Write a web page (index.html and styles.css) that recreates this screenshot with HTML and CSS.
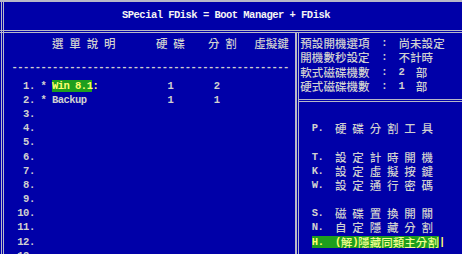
FILE: index.html
```html
<!DOCTYPE html>
<html lang="zh-Hant">
<head>
    <meta charset="UTF-8">
    <title>SPecial FDisk</title>
    <link rel="stylesheet" href="styles.css">
</head>
<body>
    <div class="screen">
        <div class="top"></div>
        <div class="title">SPecial FDisk = Boot Manager + FDisk</div>
        <div class="sep"></div>

        <div class="main">
            <!-- lista de sistemas -->
            <div class="left">
                <div class="row">         <b class="w">選</b> <b class="w">單</b> <b class="w">說</b> <b class="w">明</b>       <b class="w">硬</b> <b class="w">碟</b>    <b class="w">分</b> <b class="w">割</b>   <b class="w">虛</b><b class="w">擬</b><b class="w">鍵</b></div>
                <div class="row"></div>
                <div class="row dash">  ------------------------------------------------</div>
                <div class="row">    1. * <span class="hl">Win 8.1</span><span class="cur">:</span>            1       2</div>
                <div class="row">    2. * Backup              1       1</div>
                <div class="row">    3.</div>
                <div class="row">    4.</div>
                <div class="row">    5.</div>
                <div class="row">    6.</div>
                <div class="row">    7.</div>
                <div class="row">    8.</div>
                <div class="row">    9.</div>
                <div class="row">   10.</div>
                <div class="row">   11.</div>
                <div class="row">   12.</div>
                <div class="row">   13.</div>
            </div>

            <!-- configuracao e menu -->
            <div class="right">
                <div class="info">
                    <div class="row"><b class="w">預</b><b class="w">設</b><b class="w">開</b><b class="w">機</b><b class="w">選</b><b class="w">項</b>  :  <b class="w">尚</b><b class="w">未</b><b class="w">設</b><b class="w">定</b></div>
                    <div class="row"><b class="w">開</b><b class="w">機</b><b class="w">數</b><b class="w">秒</b><b class="w">設</b><b class="w">定</b>  :  <b class="w">不</b><b class="w">計</b><b class="w">時</b></div>
                    <div class="row"><b class="w">軟</b><b class="w">式</b><b class="w">磁</b><b class="w">碟</b><b class="w">機</b><b class="w">數</b>  :  2  <b class="w">部</b></div>
                    <div class="row"><b class="w">硬</b><b class="w">式</b><b class="w">磁</b><b class="w">碟</b><b class="w">機</b><b class="w">數</b>  :  1  <b class="w">部</b></div>
                </div>
                <div class="hsep"></div>
                <div class="menu">
                    <div class="row"></div>
                    <div class="row">  P.  <b class="w">硬</b> <b class="w">碟</b> <b class="w">分</b> <b class="w">割</b> <b class="w">工</b> <b class="w">具</b></div>
                    <div class="row"></div>
                    <div class="row">  T.  <b class="w">設</b> <b class="w">定</b> <b class="w">計</b> <b class="w">時</b> <b class="w">開</b> <b class="w">機</b></div>
                    <div class="row">  K.  <b class="w">設</b> <b class="w">定</b> <b class="w">虛</b> <b class="w">擬</b> <b class="w">按</b> <b class="w">鍵</b></div>
                    <div class="row">  W.  <b class="w">設</b> <b class="w">定</b> <b class="w">通</b> <b class="w">行</b> <b class="w">密</b> <b class="w">碼</b></div>
                    <div class="row"></div>
                    <div class="row">  S.  <b class="w">磁</b> <b class="w">碟</b> <b class="w">置</b> <b class="w">換</b> <b class="w">開</b> <b class="w">關</b></div>
                    <div class="row">  N.  <b class="w">自</b> <b class="w">定</b> <b class="w">隱</b> <b class="w">藏</b> <b class="w">分</b> <b class="w">割</b></div>
                    <div class="row">  <span class="hl">H.  (<b class="w">解</b>)<b class="w">隱</b><b class="w">藏</b><b class="w">同</b><b class="w">類</b><b class="w">主</b><b class="w">分</b><b class="w">割</b></span><span class="cur">|</span></div>
                </div>
            </div>
        </div>
    </div>
</body>
</html>
```

FILE: styles.css
```css
body {
    margin: 0;
    background: #0000a8;
}
.screen {
    width: 462px;
    height: 254px;
    overflow: hidden;
    background: #0000a8;
    color: #d0d0d0;
    font: bold 10.5px/14.18px "Liberation Mono", "Noto Sans CJK TC", monospace;
    letter-spacing: -0.525px;
    box-shadow: inset 1px 0 0 #0000a8, inset 2px 0 0 #b8b8c8, inset 3px 0 0 #0000a8, inset 4px 0 0 #b8b8c8;
}
.top {
    height: 7.9px;
    box-sizing: border-box;
    border-top: 2px solid #b8b8c8;
}
.title {
    height: 14.18px;
    text-align: center;
    color: #f4f4f4;
    padding-right: 10px;
    white-space: pre;
}
.sep {
    box-sizing: border-box;
    border-bottom: 3px double #b8b8c8;
    height: 11.1px;
}
.main {
    display: flex;
}
.left {
    width: 295px;
    flex: none;
    padding-top: 3.08px;
}
.right {
    flex: 1;
    border-left: 2px solid #b8b8c8;
    box-shadow: inset 1px 0 0 #0000a8, inset 2px 0 0 #b8b8c8;
    padding-top: 3.08px;
}
.info, .menu {
    padding-left: 3.3px;
}
.row {
    height: 14.18px;
    white-space: pre;
}
.dash {
    line-height: 5px;
}
.hsep {
    box-sizing: border-box;
    border-bottom: 3px double #b8b8c8;
    height: 8.6px;
    margin-bottom: 5.58px;
    margin-left: 2px;
}
.w {
    display: inline-block;
    width: 11.55px;
    text-align: center;
    letter-spacing: 0;
    font-family: "Noto Sans CJK TC", sans-serif;
    font-size: 11.5px;
    font-weight: 500;
    color: #d0d0d0;
    vertical-align: top;
}
.hl {
    background: #1e9e1e;
    color: #ffff70;
}
.hl .w {
    color: #f0ff90;
}
.cur {
    color: #ffff70;
}
```
